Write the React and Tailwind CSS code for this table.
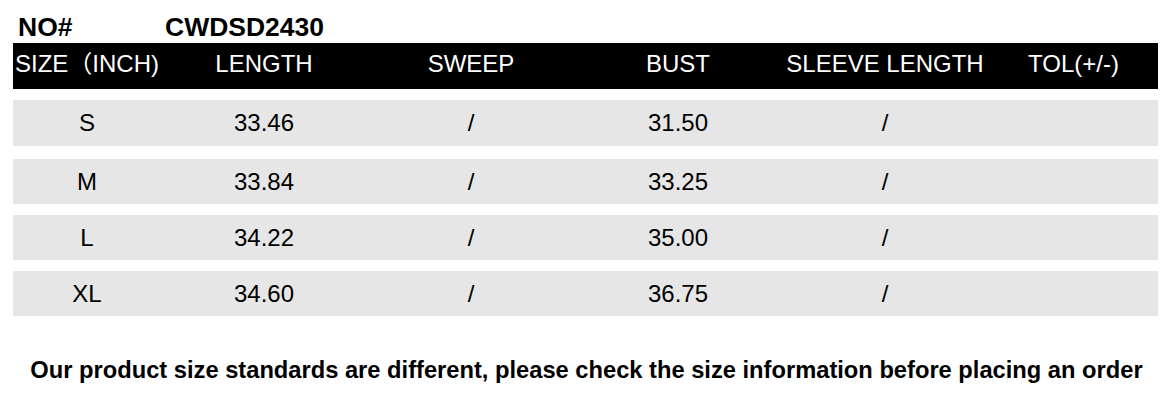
const columns = [
  { label: "SIZE（INCH)", w: "w-[148px]" },
  { label: "LENGTH", w: "w-[206px]" },
  { label: "SWEEP", w: "w-[208px]" },
  { label: "BUST", w: "w-[206px]" },
  { label: "SLEEVE LENGTH", w: "w-[208px]" },
  { label: "TOL(+/-)", w: "w-[169px]" },
];

const rows = [
  { cells: ["S", "33.46", "/", "31.50", "/", ""], cls: "mt-[11px] h-[46px]" },
  { cells: ["M", "33.84", "/", "33.25", "/", ""], cls: "mt-[13px] h-[45px]" },
  { cells: ["L", "34.22", "/", "35.00", "/", ""], cls: "mt-[11px] h-[45px]" },
  { cells: ["XL", "34.60", "/", "36.75", "/", ""], cls: "mt-[11px] h-[45px]" },
];

const App = () => {
  return (
    <div className="w-[1173px] h-[403px] bg-white text-black font-['Liberation_Sans','Noto_Sans_CJK_SC',Arial,sans-serif] overflow-hidden">
      <div className="h-[43px] pt-[12px] flex text-[26.5px] leading-[30px] font-bold">
        <span className="ml-[18px] w-[147px]">NO#</span>
        <span>CWDSD2430</span>
      </div>

      <div className="ml-[13px] w-[1145px]">
        <div className="h-[46px] bg-black text-white flex items-center pb-[4px] text-[24px] leading-none">
          {columns.map((c) => (
            <div key={c.label} className={`${c.w} text-center whitespace-nowrap`}>
              {c.label}
            </div>
          ))}
        </div>

        {rows.map((r) => (
          <div key={r.cells[0]} className={`${r.cls} bg-[#e6e6e6] flex items-center text-[24px] leading-none`}>
            {r.cells.map((v, i) => (
              <div key={i} className={`${columns[i].w} text-center`}>
                {v}
              </div>
            ))}
          </div>
        ))}
      </div>

      <p className="mt-[42px] text-center text-[23.7px] leading-[24px] font-bold whitespace-nowrap">
        Our product size standards are different, please check the size information before placing an order
      </p>
    </div>
  );
};

export default App;
